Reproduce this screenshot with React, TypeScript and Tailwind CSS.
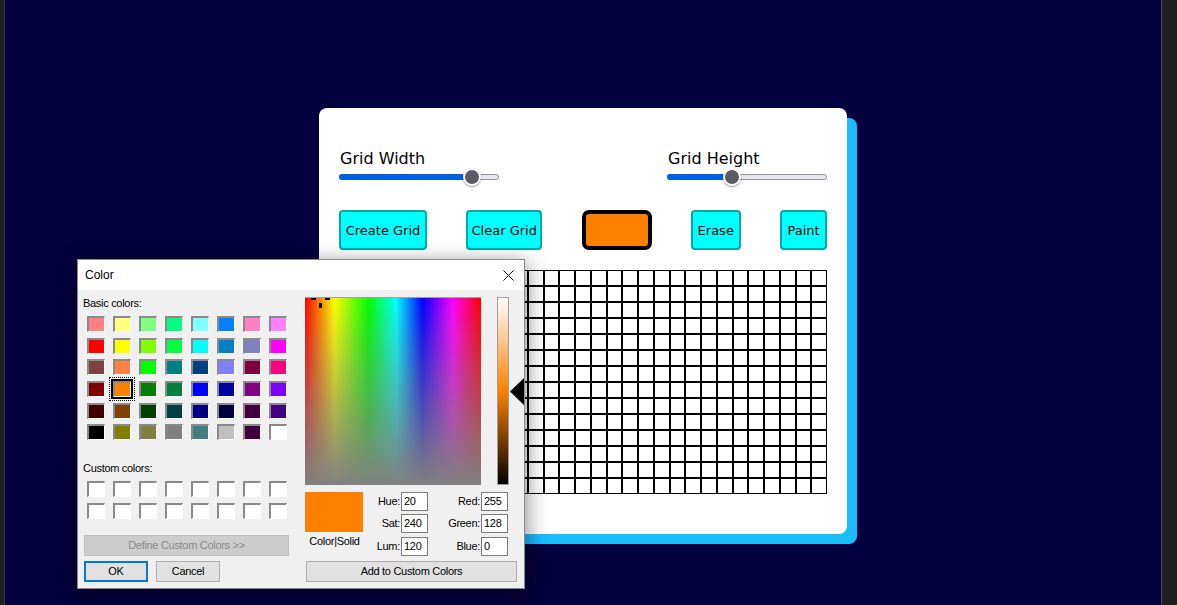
import React from "react";

// ---------------------------------------------------------------------------
// Data
// ---------------------------------------------------------------------------

const BASIC_COLORS = [
  ["bg-[#ff8080]", "bg-[#ffff80]", "bg-[#80ff80]", "bg-[#00ff80]", "bg-[#80ffff]", "bg-[#0080ff]", "bg-[#ff80c0]", "bg-[#ff80ff]"],
  ["bg-[#ff0000]", "bg-[#ffff00]", "bg-[#80ff00]", "bg-[#00ff40]", "bg-[#00ffff]", "bg-[#0080c0]", "bg-[#8080c0]", "bg-[#ff00ff]"],
  ["bg-[#804040]", "bg-[#ff8040]", "bg-[#00ff00]", "bg-[#008080]", "bg-[#004080]", "bg-[#8080ff]", "bg-[#800040]", "bg-[#ff0080]"],
  ["bg-[#800000]", "bg-[#ff8000]", "bg-[#008000]", "bg-[#008040]", "bg-[#0000ff]", "bg-[#0000a0]", "bg-[#800080]", "bg-[#8000ff]"],
  ["bg-[#400000]", "bg-[#804000]", "bg-[#004000]", "bg-[#004040]", "bg-[#000080]", "bg-[#000040]", "bg-[#400040]", "bg-[#400080]"],
  ["bg-[#000000]", "bg-[#808000]", "bg-[#808040]", "bg-[#808080]", "bg-[#408080]", "bg-[#c0c0c0]", "bg-[#400040]", "bg-[#ffffff]"],
];

const GRID_ROWS = 14;
const GRID_COLS = 31;

// ---------------------------------------------------------------------------
// Card pieces
// ---------------------------------------------------------------------------

function Slider({ label, thumbX }: { label: string; thumbX: number }) {
  return (
    <div className="w-[160px]">
      <div className="h-[19px] pl-px text-[16px] leading-[19px] text-black">{label}</div>
      <div className="relative h-[18px]">
        <div className="absolute left-0 right-0 top-[6px] h-[6px] rounded-full border border-[#8f8f9d] bg-[#e9e9ed]" />
        <div
          className="absolute left-0 top-[6px] h-[6px] rounded-full bg-[#0060df]"
          style={{ width: thumbX }}
        />
        <div
          className="absolute top-0 h-[18px] w-[18px] rounded-full border-2 border-white bg-[#5b5b66] shadow-[0_1px_2px_rgba(0,0,0,0.4)]"
          style={{ left: thumbX - 9 }}
        />
      </div>
    </div>
  );
}

function CyanButton({ label, width }: { label: string; width: string }) {
  return (
    <button
      className={`flex h-10 items-center justify-center rounded-[4px] border-2 border-[#00a8a8] bg-[#00ffff] pt-[2px] text-[13px] text-black ${width}`}
    >
      {label}
    </button>
  );
}

function PixelGrid() {
  const cells = [];
  for (let i = 0; i < GRID_ROWS * GRID_COLS; i++) {
    cells.push(<div key={i} className="h-4 border border-black bg-white" />);
  }
  return <div className="mt-5 grid grid-cols-[repeat(31,minmax(0,1fr))]">{cells}</div>;
}

// ---------------------------------------------------------------------------
// Windows colour dialog
// ---------------------------------------------------------------------------

function Swatch({ color, selected }: { color: string; selected?: boolean }) {
  return (
    <div className="relative h-[16px] w-[18px]">
      <div
        className={`h-full w-full border-b border-l-2 border-r border-t-2 border-b-white border-l-[#8a8a8a] border-r-white border-t-[#8a8a8a] ${color}`}
      />
      {selected && (
        <>
          <div className="absolute -inset-[2px] border-2 border-black" />
          <div className="absolute -inset-[4px] border border-dotted border-black" />
        </>
      )}
    </div>
  );
}

function Field({ value }: { value: string }) {
  return (
    <div className="h-[19px] w-[27px] border border-[#7a7a7a] bg-white pl-[2px] leading-[17px]">
      {value}
    </div>
  );
}

function Spectrum() {
  return (
    <svg width="176" height="188" className="block">
      <defs>
        <linearGradient id="hue" x1="0" y1="0" x2="1" y2="0">
          <stop offset="0" stopColor="#ff0000" />
          <stop offset="0.167" stopColor="#ffff00" />
          <stop offset="0.36" stopColor="#00ff00" />
          <stop offset="0.52" stopColor="#00ffff" />
          <stop offset="0.667" stopColor="#0000ff" />
          <stop offset="0.84" stopColor="#ff00ff" />
          <stop offset="1" stopColor="#ff0000" />
        </linearGradient>
        <linearGradient id="sat" x1="0" y1="0" x2="0" y2="1">
          <stop offset="0" stopColor="#808080" stopOpacity="0" />
          <stop offset="1" stopColor="#808080" stopOpacity="1" />
        </linearGradient>
      </defs>
      <rect width="176" height="188" fill="url(#hue)" />
      <rect width="176" height="188" fill="url(#sat)" />
      <rect x="0" y="0" width="176" height="1" fill="#a0a0a0" />
      {/* crosshair */}
      <rect x="6" y="1" width="5" height="2" fill="#000" />
      <rect x="20" y="1" width="5" height="2" fill="#000" />
      <rect x="14" y="6" width="3" height="5" fill="#000" />
    </svg>
  );
}

function ColorDialog() {
  return (
    <div className="absolute left-[77px] top-[259px] h-[330px] w-[448px] border border-[#8a8a8a] bg-[#f0f0f0] font-['Liberation_Sans',Arial,sans-serif] text-[11px] tracking-[-0.3px] text-black shadow-[2px_4px_20px_rgba(0,0,0,0.45)]">
      {/* Title bar */}
      <div className="flex h-[30px] items-center justify-between bg-white pl-[7px] pr-[10px]">
        <span className="text-[12px] tracking-normal">Color</span>
        <svg width="11" height="11" viewBox="0 0 11 11">
          <path d="M0.5 0.5 L10.5 10.5 M10.5 0.5 L0.5 10.5" stroke="#000" strokeWidth="1" />
        </svg>
      </div>

      <div className="flex">
        {/* Left column */}
        <div className="w-[222px] pl-[5px]">
          <div className="mt-[7px] h-[13px] leading-[13px]">Basic colors:</div>
          <div className="ml-[4px] mt-[6px] grid grid-cols-[repeat(8,18px)] gap-x-[8px] gap-y-[5.7px]">
            {BASIC_COLORS.flatMap((row, r) =>
              row.map((c, i) => <Swatch key={`${r}-${i}`} color={c} selected={r === 3 && i === 1} />)
            )}
          </div>

          <div className="mt-[22px] h-[13px] leading-[13px]">Custom colors:</div>
          <div className="ml-[4px] mt-[6px] grid grid-cols-[repeat(8,18px)] gap-x-[8px] gap-y-[5.7px]">
            {Array.from({ length: 16 }).map((_, i) => (
              <Swatch key={i} color="bg-white" />
            ))}
          </div>

          <div className="ml-[1px] mt-[16px] flex h-[21px] w-[205px] items-center justify-center border border-[#bfbfbf] bg-[#cccccc] text-[#8a8a8a]">
            Define Custom Colors &gt;&gt;
          </div>
          <div className="ml-[1px] mt-[5px] flex gap-[8px]">
            <div className="flex h-[21px] w-[64px] items-center justify-center border-2 border-[#0078d7] bg-[#e1e1e1]">
              OK
            </div>
            <div className="flex h-[21px] w-[64px] items-center justify-center border border-[#adadad] bg-[#e1e1e1]">
              Cancel
            </div>
          </div>
        </div>

        {/* Right column */}
        <div className="pl-[5px]">
          <div className="mt-[7px] flex items-center">
            <Spectrum />
            <div className="ml-[16px] h-[188px] w-[12px] border border-[#a0a0a0] bg-[linear-gradient(to_bottom,#ffffff,#ff8000_50%,#000000)]" />
            <svg width="14" height="27" viewBox="0 0 14 27" className="ml-[1px]">
              <polygon points="0,13.5 14,0 14,27" fill="#000" />
            </svg>
          </div>

          <div className="mt-[7px] flex">
            <div className="w-[59px]">
              <div className="h-[41px] w-[59px] border-b border-r border-white bg-[#ff8000]" />
              <div className="mt-[2px] text-center leading-[13px]">Color|Solid</div>
            </div>
            <div className="flex w-[37px] flex-col items-end gap-[3.3px] pr-[1px]">
              <div className="h-[19px] leading-[19px]">Hue:</div>
              <div className="h-[19px] leading-[19px]">Sat:</div>
              <div className="h-[19px] leading-[19px]">Lum:</div>
            </div>
            <div className="flex flex-col gap-[3.3px]">
              <Field value="20" />
              <Field value="240" />
              <Field value="120" />
            </div>
            <div className="flex w-[53px] flex-col items-end gap-[3.3px] pr-[1px]">
              <div className="h-[19px] leading-[19px]">Red:</div>
              <div className="h-[19px] leading-[19px]">Green:</div>
              <div className="h-[19px] leading-[19px]">Blue:</div>
            </div>
            <div className="flex flex-col gap-[3.3px]">
              <Field value="255" />
              <Field value="128" />
              <Field value="0" />
            </div>
          </div>

          <div className="ml-[1px] mt-[5px] flex h-[21px] w-[211px] items-center justify-center border border-[#adadad] bg-[#e1e1e1]">
            Add to Custom Colors
          </div>
        </div>
      </div>
    </div>
  );
}

// ---------------------------------------------------------------------------
// Page
// ---------------------------------------------------------------------------

export default function App() {
  return (
    <div className="relative flex h-[605px] w-full overflow-hidden font-['DejaVu_Sans',Verdana,sans-serif]">
      <div className="w-[5px] border-r border-[#3a3a3a] bg-[#1f1f1f]" />

      <main className="flex flex-1 justify-center bg-[#05003e] pt-[108px]">
        <div className="h-[426px] w-[528px] rounded-[8px] bg-white px-5 pb-10 pt-[41px] shadow-[10px_10px_0_#1abcfc]">
          <div className="flex justify-between">
            <Slider label="Grid Width" thumbX={133} />
            <Slider label="Grid Height" thumbX={65} />
          </div>

          <div className="mt-6 flex justify-between">
            <CyanButton label="Create Grid" width="w-[88px]" />
            <CyanButton label="Clear Grid" width="w-[76px]" />
            <button className="h-10 w-[70px] rounded-[7px] border-4 border-black bg-[#ff8000]" />
            <CyanButton label="Erase" width="w-[50px]" />
            <CyanButton label="Paint" width="w-[47px]" />
          </div>

          <PixelGrid />
        </div>
      </main>

      <div className="w-[16px] border-l border-[#4a4a4a] bg-[#1f1f1f]" />

      <ColorDialog />
    </div>
  );
}
